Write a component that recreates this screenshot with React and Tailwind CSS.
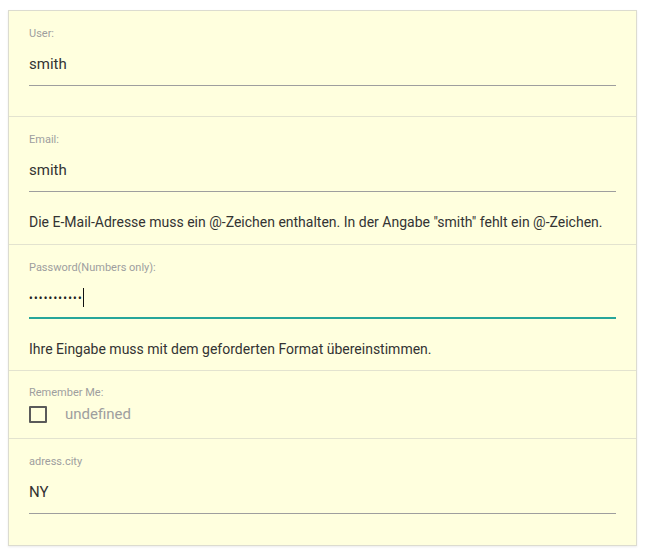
import React from "react";

const Field = ({ label, value, focused, error, password }) => (
  <div className="px-[20px] pt-[16px] border-b border-[#e3e3cf]">
    <div className="text-[11px] leading-[13px] text-[#9e9e9e]">{label}</div>
    <div
      className={`flex items-end ${
        focused
          ? "h-[45px] pb-[10px] border-b-2 border-[#26a69a]"
          : "h-[46px] pb-[11px] border-b border-[#9e9e9e]"
      }`}
    >
      {password ? (
        <span className="flex items-center h-[20px] text-[#222]">
          <span className="text-[10px] tracking-[1.3px] font-bold pt-[2px]">{value}</span>
          <span className="w-px h-[19px] bg-[#111]" />
        </span>
      ) : (
        <span className="text-[15px] leading-[20px] text-[#333]">{value}</span>
      )}
    </div>
    {error ? (
      <div className={`mt-[20px] text-[14px] leading-[20px] text-[#333] ${focused ? "mb-[11px]" : "mb-[12px]"}`}>
        {error}
      </div>
    ) : (
      <div className="h-[30px]" />
    )}
  </div>
);

const App = () => {
  return (
    <div className="bg-white min-h-screen pt-[10px] px-[8px] font-['Roboto',sans-serif]">
      <div className="w-[629px] bg-[#ffffde] border border-[#dcdcd0] shadow-[0_1px_2px_rgba(0,0,0,0.08)]">
        <Field label="User:" value="smith" />
        <Field
          label="Email:"
          value="smith"
          error={'Die E-Mail-Adresse muss ein @-Zeichen enthalten. In der Angabe "smith" fehlt ein @-Zeichen.'}
        />
        <Field
          label="Password(Numbers only):"
          value="•••••••••••"
          password
          focused
          error="Ihre Eingabe muss mit dem geforderten Format übereinstimmen."
        />
        <div className="px-[20px] pt-[15px] pb-[15px] border-b border-[#e3e3cf]">
          <div className="text-[11px] leading-[13px] text-[#9e9e9e]">Remember Me:</div>
          <div className="flex items-center mt-[6px] h-[18px]">
            <span className="w-[18px] h-[17px] border-2 border-[#5a5a5a] rounded-[1px]" />
            <span className="ml-[18px] text-[15px] text-[#9e9e9e]">undefined</span>
          </div>
        </div>
        <div className="px-[20px] pt-[16px]">
          <div className="text-[11px] leading-[13px] text-[#9e9e9e]">adress.city</div>
          <div className="h-[46px] pb-[11px] flex items-end border-b border-[#9e9e9e]">
            <span className="text-[15px] leading-[20px] text-[#333]">NY</span>
          </div>
          <div className="h-[31px]" />
        </div>
      </div>
    </div>
  );
};

export default App;
